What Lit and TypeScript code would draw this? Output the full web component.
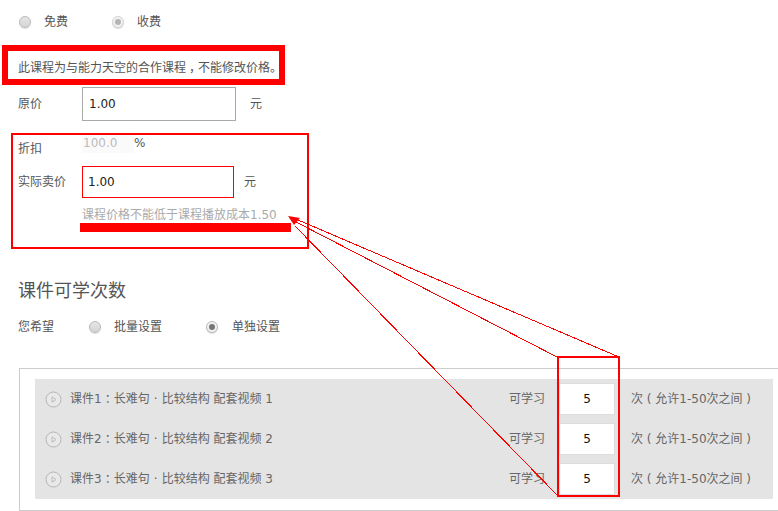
import { LitElement, html, css, svg } from "lit";
import { customElement } from "lit/decorators.js";

const LESSONS = [1, 2, 3];

@customElement("app-root")
export class AppRoot extends LitElement {
  static styles = css`
    :host {
      display: block;
      position: relative;
      width: 778px;
      height: 511px;
      overflow: hidden;
      background: #fff;
      color: #555;
      font: 12px/16px "DejaVu Sans", "Noto Sans CJK SC", sans-serif;
    }
    .page { padding: 14px 0 0 19px; box-sizing: border-box; height: 511px; }
    .row { display: flex; align-items: center; }
    .radio {
      width: 12px; height: 12px; border-radius: 50%; box-sizing: border-box;
      border: 1px solid #bbb; background: linear-gradient(#e6e6e6, #d4d4d4);
      box-shadow: 0 1px 1px #ddd; flex: none; display: flex; align-items: center; justify-content: center;
    }
    .radio.on { background: #f2f2f2; }
    .radio.on::after { content: ""; width: 6px; height: 6px; border-radius: 50%; background: #777; }
    .radio.dim { border-color: #d4d4d4; }
    .radio.dim::after { background: #b5b5b5; }
    .choice { display: flex; align-items: center; gap: 13px; }
    .price-type { height: 16px; }
    .price-type .first { width: 93px; }
    .note { margin: 30px 0 0 -1px; height: 16px; white-space: nowrap; }
    .field { display: flex; align-items: center; }
    .label { width: 64px; margin-left: -1px; flex: none; }
    .input {
      box-sizing: border-box; border: 1px solid #aaa; background: #fff; color: #222;
      font-size: 12px; display: flex; align-items: center;
    }
    .original { margin-top: 11px; }
    .original .input { width: 154px; height: 34px; padding-left: 6px; }
    .unit { margin-left: 14px; }
    .discount { margin-top: 16px; height: 20px; align-items: flex-start; }
    .discount .label { padding-top: 4px; }
    .discount-value { width: 52px; height: 20px; margin-top: -4px; background: #fafafa; color: #bbb; font-size: 12px; line-height: 20px; padding-left: 1px; box-sizing: border-box; }
    .discount-unit { margin-top: -4px; line-height: 20px; color: #555; }
    .sale { margin-top: 9px; }
    .sale .input { width: 152px; height: 32px; border-color: #f00; padding-left: 5px; }
    .sale .unit { margin-left: 10px; }
    .hint { margin: 9px 0 0 63px; color: #aaa; white-space: nowrap; }
    h2 { margin: 56px 0 0 -1px; font-size: 18px; font-weight: 400; line-height: 24px; color: #555; }
    .wish { margin-top: 16px; height: 16px; }
    .wish .label { width: 71px; }
    .wish .first { width: 117px; }
    .wish .second { gap: 14px; }
    .lessons {
      margin-top: 33px; width: 800px; height: 143px; box-sizing: border-box;
      border: 1px solid #ccc; border-right: 0; padding: 10px 0 0 15px;
    }
    .lessons-inner { width: 738px; height: 120px; background: #e4e4e4; }
    .lesson { height: 40px; display: flex; align-items: center; padding-left: 10px; color: #666; }
    .play { flex: none; margin-right: 8px; }
    .title { width: 439px; white-space: nowrap; }
    .learn { width: 50px; }
    .count {
      box-sizing: border-box; width: 56px; height: 32px; background: #fff; border: 1px solid #ddd;
      color: #111; font-size: 12px; display: flex; align-items: center; justify-content: center;
    }
    .limit { margin-left: 16px; white-space: nowrap; }
    .fw { display: inline-block; }
    .fw-center { width: 12px; text-align: center; }
    .fw-lead { margin: 0 0 0 3px; letter-spacing: -3px; }
    .marks { position: absolute; left: 0; top: 0; pointer-events: none; }
    .thin { shape-rendering: crispEdges; }
  `;

  private lesson(n: number) {
    return html`<div class="lesson">
      <svg class="play" width="17" height="17" viewBox="0 0 17 17">
        <circle cx="8.5" cy="8.5" r="7.5" fill="#e9e9e9" stroke="#b5b5b5" stroke-width="1"></circle>
        <path d="M7 5.8 L11 8.5 L7 11.2 Z" fill="none" stroke="#bbb"></path>
      </svg>
      <div class="title">课件${n}<span class="fw fw-lead">：</span>长难句<span class="fw fw-center">·</span>比较结构 配套视频 ${n}</div>
      <div class="learn">可学习</div>
      <div class="count">5</div>
      <div class="limit">次 ( 允许1-50次之间 )</div>
    </div>`;
  }

  render() {
    return html`
      <div class="page">
        <div class="row price-type">
          <div class="choice first"><span class="radio"></span>免费</div>
          <div class="choice"><span class="radio on dim"></span>收费</div>
        </div>
        <div class="note">此课程为与能力天空的合作课程<span class="fw fw-lead">，</span>不能修改价格。</div>
        <div class="field original">
          <div class="label">原价</div><div class="input">1.00</div><div class="unit">元</div>
        </div>
        <div class="field discount">
          <div class="label">折扣</div><div class="discount-value">100.0</div><div class="discount-unit">%</div>
        </div>
        <div class="field sale">
          <div class="label">实际卖价</div><div class="input">1.00</div><div class="unit">元</div>
        </div>
        <div class="hint">课程价格不能低于课程播放成本1.50</div>
        <h2>课件可学次数</h2>
        <div class="row wish">
          <div class="label">您希望</div>
          <div class="choice first"><span class="radio"></span>批量设置</div>
          <div class="choice second"><span class="radio on"></span>单独设置</div>
        </div>
        <div class="lessons"><div class="lessons-inner">${LESSONS.map((n) => this.lesson(n))}</div></div>
      </div>
      <svg class="marks" width="778" height="511" viewBox="0 0 778 511">
        ${svg`
          <rect x="5" y="48" width="277" height="34" fill="none" stroke="#f00" stroke-width="6"></rect>
          <rect x="12" y="134" width="296" height="114" fill="none" stroke="#f00" stroke-width="2"></rect>
          <rect x="558" y="357" width="61" height="139" fill="none" stroke="#f00" stroke-width="2"></rect>
          <rect x="80" y="223" width="211" height="9" fill="#f00"></rect>
          <path d="M288 216 L300 218 L294 225 Z" fill="#f00"></path>
          <g class="thin" fill="none" stroke="#f00" stroke-width="1">
            <path d="M298 220 L619 357"></path>
            <path d="M296 222 L557 357"></path>
            <path d="M295 226 L558 496"></path>
          </g>
        `}
      </svg>
    `;
  }
}
